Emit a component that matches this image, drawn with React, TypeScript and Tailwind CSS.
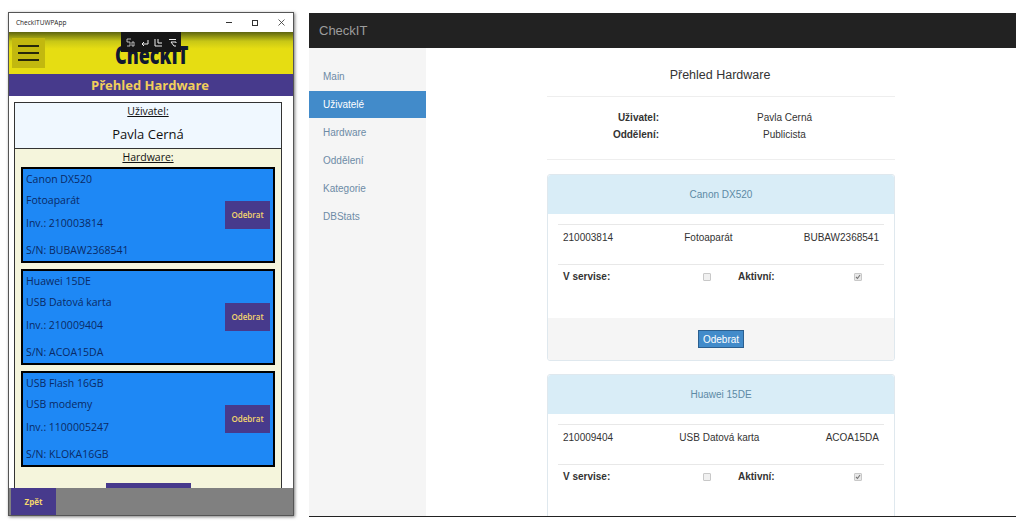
import React from "react";

const segoe = { fontFamily: '"Open Sans","Noto Sans",sans-serif' };

function MobileCard({ a, b, c, d, last }: { a: string; b: string; c: string; d: string; last?: boolean }) {
  return (
    <div className={`h-[96px] border-2 border-black bg-[#1e88f5] flex justify-between items-center pl-[3px] pr-[3px] ${last ? "" : "mb-[6px]"}`}>
      <div className="text-[10.5px] leading-[14px] text-[#0a2a66] h-full flex flex-col">
        <div className="h-[20px] flex items-center">{a}</div>
        <div className="h-[22px] flex items-center">{b}</div>
        <div className="h-[24px] flex items-center">{c}</div>
        <div className="h-[22px] mt-[4px] flex items-center">{d}</div>
      </div>
      <div className="w-[45px] h-[28px] bg-[#473a8c] text-[#f5d76e] text-[8px] font-semibold flex items-center justify-center">Odebrat</div>
    </div>
  );
}

function MobileWindow() {
  return (
    <div style={segoe} className="relative w-[286px] h-[504px] shrink-0 flex flex-col overflow-hidden bg-white border border-[#555] shadow-[1px_1px_3px_rgba(0,0,0,0.5)]">
      <div className="h-[19px] shrink-0 flex items-center justify-between pl-[7px] pr-[8px] text-[#222]">
        <span className="text-[6.5px]">CheckITUWPApp</span>
        <div className="flex items-center gap-[20px] text-[#333]">
          <div className="w-[6px] h-[1px] bg-[#333]" />
          <div className="w-[6px] h-[6px] border border-[#333]" />
          <svg width="7" height="7" viewBox="0 0 7 7" stroke="#333" strokeWidth="0.8"><path d="M0.5 0.5 L6.5 6.5 M6.5 0.5 L0.5 6.5" /></svg>
        </div>
      </div>
      <div className="relative h-[42px] shrink-0 bg-[linear-gradient(#5d6410_0%,#c8c716_22%,#e6dd12_40%,#e6dd12_100%)]">
        <div className="ml-[3px] mt-[6px] w-[33px] h-[30px] inline-flex flex-col justify-center gap-[5px] px-[6px] bg-[#c2b80f] align-top">
          <div className="h-[2px] bg-[#27270a]" />
          <div className="h-[2px] bg-[#27270a]" />
          <div className="h-[2px] bg-[#27270a]" />
        </div>
        <div className="absolute left-[106px] top-[8px] text-[18px] leading-[28px] font-extrabold text-[#101830] scale-y-[1.4]">CheckIT</div>
        <div className="absolute left-[112px] top-0 w-[60px] h-[20px] bg-[#161616] flex items-center justify-center gap-[5px]">
          <svg width="9" height="9" viewBox="0 0 9 9" fill="none" stroke="#ddd" strokeWidth="0.8"><path d="M1 1h4M1 1v3h3v4H1M6 4h2v4H6z" /></svg>
          <svg width="9" height="9" viewBox="0 0 9 9" fill="none" stroke="#eee" strokeWidth="1"><path d="M8 2v4H2M4 4 2 6l2 2" /></svg>
          <svg width="9" height="9" viewBox="0 0 9 9" fill="none" stroke="#eee" strokeWidth="1"><path d="M1 1v7h7M4 1v4h4" /></svg>
          <svg width="9" height="9" viewBox="0 0 9 9" fill="none" stroke="#eee" strokeWidth="1"><path d="M1 1.5h7M3 4h5v1M3 4l3 4M8 8H6" /></svg>
        </div>
      </div>
      <div className="h-[22px] shrink-0 bg-[#473a8c] text-[#f2cf5b] text-[13px] font-bold flex items-center justify-center pt-[2px] pr-[2px]">Přehled Hardware</div>
      <div className="mt-[6px] ml-[5px] w-[268px] flex-1 border-x border-t border-[#333] min-h-0">
        <div className="h-[46px] bg-[#f0f8ff] border-b border-[#333] flex flex-col items-center text-[#111]">
          <div className="text-[10.5px] underline leading-[17px]">Uživatel:</div>
          <div className="text-[13px] leading-[20px] mt-[4px]">Pavla Cerná</div>
        </div>
        <div className="bg-[#f5f5dc] h-[400px] px-[6px]">
          <div className="text-[10.5px] underline leading-[16px] mb-[2px] text-center text-[#111]">Hardware:</div>
          <MobileCard a="Canon DX520" b="Fotoaparát" c="Inv.: 210003814" d="S/N: BUBAW2368541" />
          <MobileCard a="Huawei 15DE" b="USB Datová karta" c="Inv.: 210009404" d="S/N: ACOA15DA" />
          <MobileCard a="USB Flash 16GB" b="USB modemy" c="Inv.: 1100005247" d="S/N: KLOKA16GB" last />
          <div className="mt-[16px] mx-auto w-[85px] h-[24px] bg-[#473a8c]" />
        </div>
      </div>
      <div className="absolute left-0 right-0 bottom-0 h-[27px] bg-[#808080] flex">
        <div className="ml-[2px] w-[45px] bg-[#473a8c] text-[#f5d76e] text-[8px] font-bold flex items-center justify-center">Zpět</div>
      </div>
    </div>
  );
}

const navItems = ["Main", "Uživatelé", "Hardware", "Oddělení", "Kategorie", "DBStats"];

function HwPanel({ name, inv, type, sn, footer }: { name: string; inv: string; type: string; sn: string; footer?: boolean }) {
  return (
    <div className="border border-[#dfe8ee] rounded-[3px] mb-[13px] shrink-0">
      <div className="h-[39px] bg-[#d9edf7] text-[#5d8aa5] flex items-center justify-center text-[10px] rounded-t-[3px]">{name}</div>
      <div className="px-[10px] pt-[10px]">
        <div className="border-t border-[#e8e8e8] h-[40px] pl-[5px] pr-[5px] pt-[6px] flex justify-between text-[10px] leading-[13px] text-[#333]">
          <div>{inv}</div>
          <div>{type}</div>
          <div>{sn}</div>
        </div>
        <div className="border-t border-[#e8e8e8] h-[54px] pl-[5px] pr-[6px] pt-[5px] flex text-[10px] leading-[13px] text-[#333] font-bold">
          <div className="w-[148px] flex justify-between">
            <span>V servise:</span>
            <span className="w-[8px] h-[8px] mt-[3px] border border-[#c8c8c8] rounded-[1px] bg-[#f0f0f0]" />
          </div>
          <div className="ml-[27px] w-[124px] flex justify-between">
            <span>Aktivní:</span>
            <span className="w-[8px] h-[8px] mt-[3px] border border-[#c8c8c8] rounded-[1px] bg-[#e8e8e8] flex items-center justify-center">
              <svg width="6" height="6" viewBox="0 0 6 6" fill="none" stroke="#777" strokeWidth="1.1"><path d="M1 3l1.5 1.5L5 1" /></svg>
            </span>
          </div>
        </div>
      </div>
      {footer && (
        <div className="h-[42px] bg-[#f5f5f5] flex items-center justify-center rounded-b-[3px]">
          <div className="w-[46px] h-[18px] bg-[#428bca] border border-[#2b5f8f] text-white text-[10px] flex items-center justify-center">Odebrat</div>
        </div>
      )}
    </div>
  );
}

function BrowserPage() {
  return (
    <div style={{ fontFamily: '"Liberation Sans",Arial,sans-serif' }} className="w-[707px] h-[504px] ml-[15px] mt-[1px] shrink-0 flex flex-col overflow-hidden border-b border-[#222]">
      <div className="h-[35px] shrink-0 bg-[#222222] text-[#9d9d9d] text-[13px] flex items-center pl-[10px]">CheckIT</div>
      <div className="flex-1 flex min-h-0">
        <div className="w-[117px] shrink-0 bg-[#f5f5f5] pt-[14px] text-[10px]">
          {navItems.map((n) => (
            <div key={n} className={`flex items-center pl-[14px] ${n === "Uživatelé" ? "h-[27px] mt-[1px] bg-[#428bca] text-white" : "h-[28px] text-[#6d8ba6]"}`}>{n}</div>
          ))}
        </div>
        <div className="flex-1 min-w-0 pl-[121px] pr-[121px] flex flex-col">
          <div className="h-[49px] shrink-0 border-b border-[#eeeeee] flex items-center justify-center pt-[6px] pr-[2px] text-[12.5px] text-[#333]">Přehled Hardware</div>
          <div className="h-[63px] shrink-0 border-b border-[#eeeeee] pt-[12px] text-[10px] leading-[17px] text-[#333]">
            <div className="flex"><div className="w-[112px] text-right font-bold">Uživatel:</div><div className="flex-1 pl-[98px]">Pavla Cerná</div></div>
            <div className="flex"><div className="w-[112px] text-right font-bold">Oddělení:</div><div className="flex-1 pl-[104px]">Publicista</div></div>
          </div>
          <div className="h-[14px] shrink-0" />
          <HwPanel name="Canon DX520" inv="210003814" type="Fotoaparát" sn="BUBAW2368541" footer />
          <HwPanel name="Huawei 15DE" inv="210009404" type="USB Datová karta" sn="ACOA15DA" />
        </div>
      </div>
    </div>
  );
}

export default function App() {
  return (
    <div className="w-[1023px] h-[526px] overflow-hidden bg-white flex items-start pt-[12px] pl-[8px]">
      <MobileWindow />
      <BrowserPage />
    </div>
  );
}
